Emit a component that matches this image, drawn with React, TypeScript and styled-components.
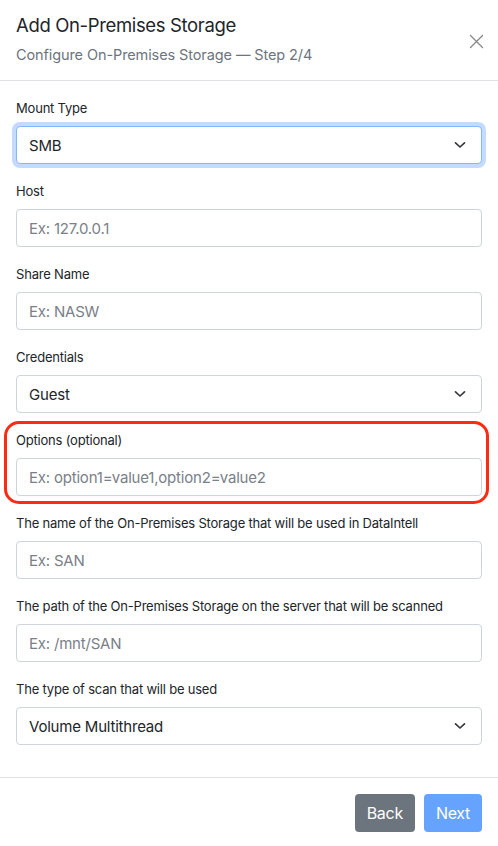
import styled, { createGlobalStyle } from 'styled-components';

const GlobalStyle = createGlobalStyle`
  html, body {
    margin: 0;
    padding: 0;
    background: #fff;
  }
  body {
    font-family: Inter, 'Liberation Sans', sans-serif;
    color: #212529;
  }
  * {
    box-sizing: border-box;
  }
`;

const Modal = styled.div`
  width: 498px;
  height: 846px;
  background: #fff;
  display: flex;
  flex-direction: column;
`;

const Header = styled.div`
  display: flex;
  align-items: center;
  justify-content: space-between;
  padding: 12px 14px 14px 16px;
  border-bottom: 1px solid #dee2e6;
`;

const Titles = styled.div`
  display: flex;
  flex-direction: column;
  gap: 6px;
`;

const Title = styled.div`
  font-size: 18.5px;
  line-height: 26px;
  letter-spacing: -0.35px;
  color: #212529;
`;

const Subtitle = styled.div`
  font-size: 14.5px;
  line-height: 22px;
  letter-spacing: -0.1px;
  color: #6c757d;
`;

const CloseButton = styled.button`
  border: none;
  background: none;
  padding: 0;
  width: 16px;
  height: 16px;
  margin-top: 4px;
  display: flex;
  align-items: center;
  justify-content: center;
  cursor: pointer;
`;

const Body = styled.div`
  padding: 17px 16px 14px 16px;
  flex: 1;
`;

const Field = styled.div`
  position: relative;
  margin-bottom: 17px;
`;

const Highlight = styled.div`
  position: absolute;
  left: -12px;
  right: -7px;
  top: -9px;
  bottom: -8px;
  border: 3px solid #ff2a12;
  border-radius: 15px;
  pointer-events: none;
`;

const Label = styled.label`
  display: block;
  font-size: 13px;
  line-height: 20px;
  letter-spacing: -0.2px;
  color: #212529;
  margin-bottom: 8px;
`;

const Input = styled.input`
  display: block;
  width: 100%;
  height: 38px;
  padding: 0 12px;
  font-family: inherit;
  font-size: 15px;
  letter-spacing: -0.2px;
  color: #212529;
  border: 1px solid #ced4da;
  border-radius: 4px;
  background: #fff;
  outline: none;
  &::placeholder {
    color: #7a8088;
  }
`;

const SelectBox = styled.div<{ $focused?: boolean }>`
  display: flex;
  align-items: center;
  justify-content: space-between;
  height: 38px;
  padding: 0 15px 0 12px;
  font-size: 15px;
  letter-spacing: -0.2px;
  color: #212529;
  border: 1px solid ${(p) => (p.$focused ? '#86b7fe' : '#ced4da')};
  border-radius: 4px;
  background: #fff;
  box-shadow: ${(p) => (p.$focused ? '0 0 0 4px rgba(13, 110, 253, 0.25)' : 'none')};
`;

const Footer = styled.div`
  display: flex;
  justify-content: flex-end;
  gap: 9px;
  padding: 16px 16px 14px 16px;
  border-top: 1px solid #dee2e6;
`;

const Button = styled.button<{ $variant: 'secondary' | 'primary' }>`
  height: 38px;
  padding: 0 12px;
  font-family: inherit;
  font-size: 16px;
  letter-spacing: -0.3px;
  color: #fff;
  border: none;
  border-radius: 4px;
  background: ${(p) => (p.$variant === 'secondary' ? '#6c757d' : '#66a3ff')};
  cursor: pointer;
`;

const Chevron = () => (
  <svg width="12" height="8" viewBox="0 0 12 8" fill="none">
    <path d="M1.5 1.8 L6 6 L10.5 1.8" stroke="#343a40" strokeWidth="1.7" strokeLinecap="round" strokeLinejoin="round" />
  </svg>
);

const CloseIcon = () => (
  <svg width="15" height="15" viewBox="0 0 15 15" fill="none">
    <path d="M1.5 1.5 L13.5 13.5 M13.5 1.5 L1.5 13.5" stroke="#8a8a8a" strokeWidth="1.4" strokeLinecap="round" />
  </svg>
);

type FieldDef =
  | { kind: 'select'; label: string; value: string; focused?: boolean }
  | { kind: 'input'; label: string; placeholder: string; highlight?: boolean };

const fields: FieldDef[] = [
  { kind: 'select', label: 'Mount Type', value: 'SMB', focused: true },
  { kind: 'input', label: 'Host', placeholder: 'Ex: 127.0.0.1' },
  { kind: 'input', label: 'Share Name', placeholder: 'Ex: NASW' },
  { kind: 'select', label: 'Credentials', value: 'Guest' },
  { kind: 'input', label: 'Options (optional)', placeholder: 'Ex: option1=value1,option2=value2', highlight: true },
  { kind: 'input', label: 'The name of the On-Premises Storage that will be used in DataIntell', placeholder: 'Ex: SAN' },
  { kind: 'input', label: 'The path of the On-Premises Storage on the server that will be scanned', placeholder: 'Ex: /mnt/SAN' },
  { kind: 'select', label: 'The type of scan that will be used', value: 'Volume Multithread' },
];

const App = () => {
  return (
    <>
      <GlobalStyle />
      <Modal>
        <Header>
          <Titles>
            <Title>Add On-Premises Storage</Title>
            <Subtitle>Configure On-Premises Storage — Step 2/4</Subtitle>
          </Titles>
          <CloseButton aria-label="Close">
            <CloseIcon />
          </CloseButton>
        </Header>
        <Body>
          {fields.map((f) => (
            <Field key={f.label}>
              <Label>{f.label}</Label>
              {f.kind === 'select' ? (
                <SelectBox $focused={f.focused}>
                  <span>{f.value}</span>
                  <Chevron />
                </SelectBox>
              ) : (
                <Input placeholder={f.placeholder} />
              )}
              {f.kind === 'input' && f.highlight && <Highlight />}
            </Field>
          ))}
        </Body>
        <Footer>
          <Button $variant="secondary">Back</Button>
          <Button $variant="primary">Next</Button>
        </Footer>
      </Modal>
    </>
  );
};

export default App;
